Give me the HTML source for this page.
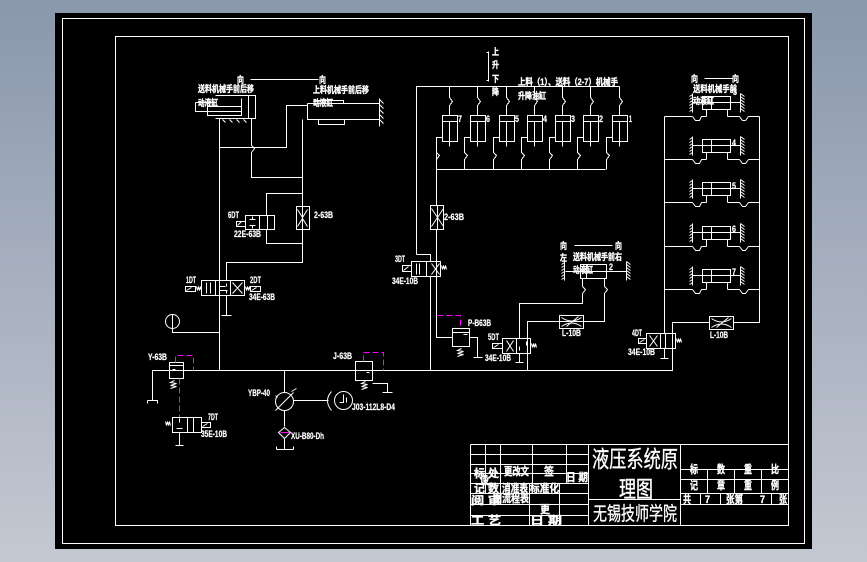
<!DOCTYPE html>
<html><head><meta charset="utf-8">
<style>
html,body{margin:0;padding:0;width:867px;height:562px;overflow:hidden;background:linear-gradient(180deg,#8a98ac 0%,#c4c8d2 100%)}
svg{position:absolute;left:0;top:0}
.l{fill:none;stroke:#fff;stroke-width:1;shape-rendering:crispEdges}
.d{fill:none;stroke:#fff;stroke-width:1}
.m{fill:none;stroke:#f0f;stroke-width:1.2;stroke-dasharray:6 3;shape-rendering:crispEdges}
text{fill:#fff;font-family:"Liberation Sans","Noto Sans CJK SC",sans-serif}
.c{font-size:9px;font-weight:700;stroke:#fff;stroke-width:.35}
.a{font-size:9px;font-weight:700;font-family:"Liberation Sans",sans-serif;stroke:#fff;stroke-width:.2}
.b{font-size:11px;font-weight:700}
.t{font-family:"Liberation Sans","Noto Sans CJK SC",sans-serif;font-weight:400}
</style></head>
<body>
<svg width="867" height="562" viewBox="0 0 867 562" xmlns="http://www.w3.org/2000/svg">
<defs>
<g id="cy" class="l"><rect x="0" y="0" width="15" height="26"/><path d="M0 6H15M7 6V31M7-29V-18"/><path class="d" d="M7-18l3 4-3 4"/><path d="M7-10V0M0 22H-6V37"/><path class="d" d="M-6 37l3 3-3 4"/><path d="M-6 44V54"/></g>
<g id="rc"><rect class="l" x="0" y="0" width="28" height="13"/><path class="l" d="M9 0V13M-10 6H38M4 13V20M25 13V20M-38 20H-10M4 20H-1M25 20H37M46 20H57"/><path class="d" d="M-10 20l3 4h4l2-4M37 20l3 4h3l3-4"/><use href="#wl" x="-10" y="-3"/><use href="#wr" x="38" y="-3"/></g>
<path id="wl" class="d" d="M0 0V19M0 1l-3 2M0 4l-3 2M0 7l-3 2M0 10l-3 2M0 13l-3 2M0 16l-3 2"/>
<path id="wr" class="d" d="M0 0V19M0 0l4 3M0 3l4 3M0 6l4 3M0 9l4 3M0 12l4 3M0 15l4 3"/>
<path id="sp" class="d" d="M0 0l-4 2 6 1-6 2 6 1-6 2"/>
<path id="wv" class="d" d="M0 0l1 4 1-4 1 4 1-4 1 4"/>
</defs>
<rect x="55" y="13" width="757" height="536" fill="#000"/>
<g transform="translate(.5,.5)">
<rect class="l" x="62" y="18" width="742" height="525"/>
<rect class="l" x="115" y="36" width="673" height="489"/>

<!-- left top cylinders -->
<path class="l" d="M215 95H255V118H215M248 95V118M207 98V115H241V98M195 102V111H241M195 102H215M207 106H241M241 98V115"/>
<path class="d" d="M222 119l3 3M229 119l3 3M236 119l3 3M243 119l3 3"/>
<path class="l" d="M219 118V370M251 118V145"/>
<path class="d" d="M251 145l3 3-3 4"/>
<path class="l" d="M251 152V177H302M219 147H286V105H307M307 103H379M307 103V119H379M379 98V126M318 119V124H344V119M302 119V262H226V280M313 100H343V103M302 193H266V215M266 229V243H302"/>
<path class="d" d="M379 99l4 4M379 104l4 4M379 109l4 4M379 114l4 4M379 119l4 4"/>
<!-- 6DT valve, throttle -->
<path class="l" d="M245 215H274V229H245ZM259 215V229M267 215V229M236 221H245V226H236Z"/>
<path class="d" d="M252 216v3M249 219h6M252 228v-3M249 225h6M237 225l4-4"/>
<path class="l" d="M296 206H309V229H296Z"/>
<path class="d" d="M297 209l5 8 5-8M297 226l5-8 5 8"/>
<!-- main valve -->
<path class="l" d="M201 280H244V295H201ZM215 280V295M230 280V295M185 286H195V291H185ZM250 286H260V291H250ZM226 295V315M221 315H231M219 280V295"/>
<path class="d" d="M206 282V293M210 282V293M219 283v3h6M226 283v3M226 293v-3M219 290h8M232 282l10 11M242 282l-10 11M186 290l5-3M251 290l5-3"/>
<use href="#wv" x="196" y="286"/><use href="#wv" x="245" y="286"/>
<circle class="d" cx="172" cy="321" r="7"/>
<path class="l" d="M172 314V332H219"/>
<!-- bus -->
<path class="l" d="M152 400V370H672V322H709M733 322H759V116"/>
<path class="l" d="M147 400H157V403M147 400V403"/>
<path class="l" d="M169 362H183V378H169ZM169 365H183M172 369H175"/>
<path class="m" d="M175 362V355H193V370"/>
<path class="m" d="M179 378V418"/>
<use href="#sp" x="174" y="380"/>
<path class="l" d="M172 417H201V432H172ZM187 417V432M193 417V432M201 422H210V427H201ZM179 432V445M175 445H183"/>
<path class="d" d="M202 426l5-3M179 418v4M176 428h6"/>
<use href="#wv" x="165" y="421"/>
<!-- pump -->
<circle class="d" cx="284" cy="401" r="9"/>
<path class="d" d="M275 410l18-18M291 391l5-3M275 395l2 2"/>
<path class="l" d="M284 370V392M293 400H328M284 410V426M284 438V449M276 449H293M276 449V446M293 449V446"/>
<path class="d" d="M284 427l6 5-6 6-6-6Z"/>
<path class="m" style="stroke-dasharray:none" d="M280 432H289"/>
<circle class="d" cx="343" cy="400" r="9"/>
<path class="d" d="M331 391q-8 9 0 19M343 394v8h-4M346 397v5"/>
<!-- J -->
<path class="l" d="M355 361H372V380H355ZM366 372H369M372 383H387V392M382 392H392"/>
<path class="m" d="M363 361V352H383V370"/>
<use href="#sp" x="365" y="381"/>
<!-- center -->
<path class="l" d="M416 254V86H619M416 254H430V261M430 276V370M436 137V205M436 229V337H452M436 261V276"/>
<path class="m" d="M437 315H460V328"/>
<path class="l" d="M430 205H443V229H430ZM437 205V229"/>
<path class="d" d="M431 208l6 9 6-9M431 226l6-9 6 9"/>
<path class="l" d="M411 261H440V276H411ZM426 261V276M402 265H411V271H402ZM419 263V274"/>
<path class="d" d="M416 263V274M431 263l8 11M439 263l-8 11M403 270l5-4"/>
<use href="#wv" x="441" y="265"/>
<path class="l" d="M452 328H469V346H452ZM452 332H469M463 334H467M469 337H477V357M473 357H482"/>
<use href="#sp" x="461" y="348"/>
<use href="#cy" x="442" y="115"/><use href="#cy" x="470" y="115"/><use href="#cy" x="499" y="115"/><use href="#cy" x="527" y="115"/><use href="#cy" x="555" y="115"/><use href="#cy" x="583" y="115"/><use href="#cy" x="612" y="115"/>
<path class="l" d="M436 169H605M488 51V81"/>
<path class="l" d="M486 52H488M486 80H488"/>
<!-- bottom center cylinder -->
<path class="l" d="M580 264H606V278H580ZM586 264V278M565 271H626M582 278V286M574 245H612"/>
<path class="l" d="M250 79H318M704 78H732"/>
<use href="#wl" x="564" y="261"/><use href="#wr" x="626" y="261"/>
<path class="d" d="M582 286l3 3-3 4M604 286l3 3-3 4"/>
<path class="l" d="M582 293V303H519V338M604 278V286M604 293V321H527V370"/>
<path class="l" d="M559 315H583V328H559Z"/>
<path class="d" d="M561 317q10 7 20 0M561 326q10-7 20 0M566 326l12-10"/>
<path class="l" d="M502 338H530V353H502ZM516 338V353M492 343H502V348H492ZM519 353V362M515 362H523"/>
<path class="d" d="M506 340l7 11M513 340l-7 11M493 347l5-3M519 350v-4M526 341v4"/>
<use href="#wv" x="531" y="343"/>
<!-- right -->
<use href="#rc" x="702" y="96"/><use href="#rc" x="702" y="139"/><use href="#rc" x="702" y="182"/><use href="#rc" x="702" y="226"/><use href="#rc" x="702" y="269"/>
<path class="l" d="M664 116V333"/>
<path class="l" d="M672 322V370"/>
<path class="l" d="M709 316H733V329H709Z"/>
<path class="d" d="M711 318q10 7 20 0M711 327q10-7 20 0M716 327l12-10"/>
<path class="l" d="M646 333H675V348H646ZM660 333V348M665 333V348M638 338H646V343H638ZM664 348V358M660 358H668"/>
<path class="d" d="M649 335l8 11M657 335l-8 11M639 342l5-3"/>
<use href="#wv" x="676" y="338"/>
<!-- title block -->
<path class="l" d="M470 444H788M470 444V525M588 444V525M680 444V525M470 454H588M470 464H588M470 473H588M470 483H588M470 493H588M470 504H588M470 515H588M470 525H788M485 444V493M500 444V493M532 444V483M566 444V483M529 483V525M559 483V525M500 493V504M588 499H680M680 469H788M680 479H788M680 493H788M680 504H788M707 469V493M734 469V493M761 469V493M700 493V504M720 493V504M741 493V504M771 493V504"/>
</g>

<!-- labels -->
<g class="c">
<text x="237" y="83" textLength="7" lengthAdjust="spacingAndGlyphs">向</text>
<text x="319" y="83" textLength="7" lengthAdjust="spacingAndGlyphs">向</text>
<text x="198" y="92" textLength="56" lengthAdjust="spacingAndGlyphs">送料机械手前后移</text>
<text x="198" y="106" textLength="20" lengthAdjust="spacingAndGlyphs">动液缸</text>
<text x="313" y="93" textLength="56" lengthAdjust="spacingAndGlyphs">上料机械手前后移</text>
<text x="313" y="106" textLength="20" lengthAdjust="spacingAndGlyphs">动液缸</text>
<text x="492" y="55" textLength="7" lengthAdjust="spacingAndGlyphs">上</text>
<text x="492" y="68" textLength="7" lengthAdjust="spacingAndGlyphs">升</text>
<text x="492" y="82" textLength="7" lengthAdjust="spacingAndGlyphs">下</text>
<text x="492" y="95" textLength="7" lengthAdjust="spacingAndGlyphs">降</text>
<text x="518" y="85" textLength="100" lengthAdjust="spacingAndGlyphs">上料（1）、送料（2-7）机械手</text>
<text x="518" y="99" textLength="28" lengthAdjust="spacingAndGlyphs">升降油缸</text>
<text x="560" y="249" textLength="7" lengthAdjust="spacingAndGlyphs">向</text>
<text x="615" y="249" textLength="7" lengthAdjust="spacingAndGlyphs">向</text>
<text x="560" y="261" textLength="7" lengthAdjust="spacingAndGlyphs">左</text>
<text x="573" y="260" textLength="49" lengthAdjust="spacingAndGlyphs">送料机械手前右</text>
<text x="573" y="273" textLength="20" lengthAdjust="spacingAndGlyphs">动液缸</text>
<text x="691" y="82" textLength="7" lengthAdjust="spacingAndGlyphs">向</text>
<text x="732" y="82" textLength="7" lengthAdjust="spacingAndGlyphs">向</text>
<text x="693" y="92" textLength="44" lengthAdjust="spacingAndGlyphs">送料机械手前</text>
<text x="693" y="104" textLength="21" lengthAdjust="spacingAndGlyphs">动液缸</text>
</g>
<g class="a">
<text x="228" y="218" textLength="11" lengthAdjust="spacingAndGlyphs">6DT</text>
<text x="314" y="218" textLength="19" lengthAdjust="spacingAndGlyphs">2-63B</text>
<text x="444" y="220" textLength="20" lengthAdjust="spacingAndGlyphs">2-63B</text>
<text x="234" y="237" textLength="27" lengthAdjust="spacingAndGlyphs">22E-63B</text>
<text x="186" y="283" textLength="10" lengthAdjust="spacingAndGlyphs">1DT</text>
<text x="250" y="283" textLength="11" lengthAdjust="spacingAndGlyphs">2DT</text>
<text x="249" y="300" textLength="26" lengthAdjust="spacingAndGlyphs">34E-63B</text>
<text x="148" y="360" textLength="19" lengthAdjust="spacingAndGlyphs">Y-63B</text>
<text x="208" y="420" textLength="10" lengthAdjust="spacingAndGlyphs">7DT</text>
<text x="201" y="437" textLength="26" lengthAdjust="spacingAndGlyphs">35E-10B</text>
<text x="333" y="359" textLength="19" lengthAdjust="spacingAndGlyphs">J-63B</text>
<text x="248" y="396" textLength="22" lengthAdjust="spacingAndGlyphs">YBP-40</text>
<text x="352" y="410" textLength="43" lengthAdjust="spacingAndGlyphs">J03-112L8-D4</text>
<text x="291" y="439" textLength="33" lengthAdjust="spacingAndGlyphs">XU-B80-Dh</text>
<text x="395" y="262" textLength="10" lengthAdjust="spacingAndGlyphs">3DT</text>
<text x="392" y="284" textLength="26" lengthAdjust="spacingAndGlyphs">34E-10B</text>
<text x="468" y="326" textLength="23" lengthAdjust="spacingAndGlyphs">P-B63B</text>
<text x="488" y="340" textLength="11" lengthAdjust="spacingAndGlyphs">5DT</text>
<text x="485" y="361" textLength="26" lengthAdjust="spacingAndGlyphs">34E-10B</text>
<text x="562" y="336" textLength="19" lengthAdjust="spacingAndGlyphs">L-10B</text>
<text x="710" y="338" textLength="18" lengthAdjust="spacingAndGlyphs">L-10B</text>
<text x="632" y="336" textLength="10" lengthAdjust="spacingAndGlyphs">4DT</text>
<text x="628" y="355" textLength="27" lengthAdjust="spacingAndGlyphs">34E-10B</text>
<text x="458" y="122" textLength="4" lengthAdjust="spacingAndGlyphs">7</text><text x="486" y="122" textLength="4" lengthAdjust="spacingAndGlyphs">6</text><text x="515" y="122" textLength="4" lengthAdjust="spacingAndGlyphs">5</text><text x="543" y="122" textLength="4" lengthAdjust="spacingAndGlyphs">4</text><text x="571" y="122" textLength="4" lengthAdjust="spacingAndGlyphs">3</text><text x="599" y="122" textLength="4" lengthAdjust="spacingAndGlyphs">2</text><text x="629" y="122" textLength="3" lengthAdjust="spacingAndGlyphs">1</text>
<text x="609" y="270" textLength="4" lengthAdjust="spacingAndGlyphs">2</text>
<text x="733" y="95" textLength="4" lengthAdjust="spacingAndGlyphs">3</text><text x="732" y="146" textLength="4" lengthAdjust="spacingAndGlyphs">4</text><text x="732" y="189" textLength="4" lengthAdjust="spacingAndGlyphs">5</text><text x="732" y="232" textLength="4" lengthAdjust="spacingAndGlyphs">6</text><text x="732" y="275" textLength="4" lengthAdjust="spacingAndGlyphs">7</text>
</g>
<g class="c">
<text class="t" style="font-size:23px" x="592" y="467" textLength="86" lengthAdjust="spacingAndGlyphs">液压系统原</text>
<text class="t" style="font-size:23px" x="619" y="497" textLength="34" lengthAdjust="spacingAndGlyphs">理图</text>
<text class="t" style="font-size:19px" x="593" y="520" textLength="84" lengthAdjust="spacingAndGlyphs">无锡技师学院</text>
<text class="b" x="474" y="477" textLength="25" lengthAdjust="spacingAndGlyphs">标 处</text>
<text class="b" x="504" y="475" textLength="25" lengthAdjust="spacingAndGlyphs">更改文</text>
<text class="b" x="544" y="475" textLength="10" lengthAdjust="spacingAndGlyphs">签</text>
<text class="b" x="566" y="481" textLength="22" lengthAdjust="spacingAndGlyphs">日 期</text>
<text class="b" x="480" y="484" textLength="9" lengthAdjust="spacingAndGlyphs">设</text>
<text class="b" x="474" y="492" textLength="25" lengthAdjust="spacingAndGlyphs">记 数</text>
<text class="b" x="502" y="492" textLength="26" lengthAdjust="spacingAndGlyphs">消准表</text>
<text class="b" x="530" y="492" textLength="29" lengthAdjust="spacingAndGlyphs">标准化</text>
<text class="b" x="471" y="504" textLength="30" lengthAdjust="spacingAndGlyphs">阅 审</text>
<text class="b" x="493" y="502" textLength="36" lengthAdjust="spacingAndGlyphs">图流程表</text>
<text class="b" x="540" y="513" textLength="10" lengthAdjust="spacingAndGlyphs">更</text>
<text class="b" x="471" y="524" textLength="30" lengthAdjust="spacingAndGlyphs">工 艺</text>
<text class="b" x="530" y="524" textLength="32" lengthAdjust="spacingAndGlyphs">日   期</text>
<text class="b" x="690" y="473" textLength="8" lengthAdjust="spacingAndGlyphs">标</text><text class="b" x="717" y="473" textLength="8" lengthAdjust="spacingAndGlyphs">数</text><text class="b" x="744" y="473" textLength="8" lengthAdjust="spacingAndGlyphs">重</text><text class="b" x="771" y="473" textLength="8" lengthAdjust="spacingAndGlyphs">比</text>
<text class="b" x="690" y="489" textLength="8" lengthAdjust="spacingAndGlyphs">记</text><text class="b" x="717" y="489" textLength="8" lengthAdjust="spacingAndGlyphs">章</text><text class="b" x="744" y="489" textLength="8" lengthAdjust="spacingAndGlyphs">重</text><text class="b" x="771" y="489" textLength="8" lengthAdjust="spacingAndGlyphs">例</text>
<text class="b" x="683" y="503" textLength="8" lengthAdjust="spacingAndGlyphs">共</text><text class="b" x="705" y="503" textLength="5" lengthAdjust="spacingAndGlyphs">7</text><text class="b" x="726" y="503" textLength="17" lengthAdjust="spacingAndGlyphs">张第</text><text class="b" x="760" y="503" textLength="5" lengthAdjust="spacingAndGlyphs">7</text><text class="b" x="779" y="503" textLength="8" lengthAdjust="spacingAndGlyphs">张</text>
</g>
</svg>
</body></html>
